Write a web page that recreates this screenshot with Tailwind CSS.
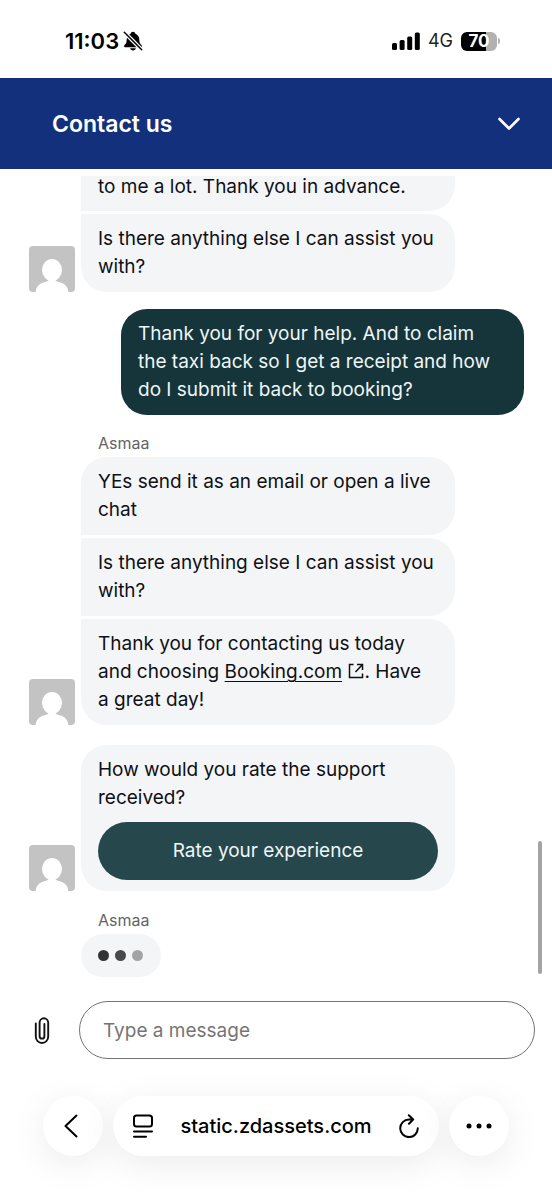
<!DOCTYPE html>
<html lang="en">
<head>
<meta charset="utf-8">
<meta name="viewport" content="width=device-width, initial-scale=1">
<title>Contact us</title>
<script src="https://cdn.jsdelivr.net/npm/@tailwindcss/browser@4"></script>
</head>
<body class="flex h-dvh flex-col overflow-hidden bg-white font-[Inter,'Liberation_Sans',sans-serif] text-[19px] leading-7 text-[#0f1014]">

<svg class="hidden" aria-hidden="true">
  <symbol id="avatar" viewBox="0 0 46 46">
    <rect width="46" height="46" rx="4" fill="#c3c3c3"/>
    <ellipse cx="23" cy="24" rx="10" ry="11" fill="#fff"/>
    <path d="M19.500 30h7v4.500c1 1.200 3.500 1.300 6 2.300 4 1.600 6.500 4.700 6.800 9.200H6.700c.3-4.500 2.800-7.600 6.800-9.200 2.500-1 5-1.100 6-2.300z" fill="#fff"/>
  </symbol>
</svg>

<!-- Phone status bar -->
<div class="flex h-[78px] shrink-0 items-center justify-between pt-1 pr-[52px] pl-[65px] text-black">
  <div class="flex items-center gap-1">
    <span class="text-[22px] font-semibold">11:03</span>
    <svg class="h-5 w-5" viewBox="0 0 20 20" role="img" aria-label="Silent">
      <path d="M10 .8c1.200 0 2.200.8 2.400 1.900 2.600.9 3.800 3 3.900 5.700.1 3.200.6 4 1.700 5.200.6.600.9 1 .9 1.600 0 .7-.5 1.100-1.400 1.100h-15c-.9 0-1.400-.4-1.400-1.100 0-.6.3-1 .9-1.600C3.100 12.400 3.600 11.600 3.700 8.400c.1-2.700 1.300-4.800 3.900-5.700C7.800 1.600 8.800.8 10 .8zM7.200 17.300h5.600c-.2 1.300-1.300 2.200-2.800 2.200s-2.600-.9-2.800-2.200z" fill="#000"/>
      <path d="M1.300 1.300 18.700 18.700" stroke="#fff" stroke-width="4"/>
      <path d="M1.300 1.300 18.700 18.700" stroke="#000" stroke-width="1.500" stroke-linecap="round"/>
    </svg>
  </div>
  <div class="flex items-center">
    <svg class="h-[18px] w-7" viewBox="0 0 28 18" role="img" aria-label="Signal strength">
      <rect x="0" y="11" width="5" height="7" rx="1.500"/><rect x="7.600" y="8" width="5" height="10" rx="1.500"/><rect x="15.200" y="4.500" width="5" height="13.500" rx="1.500"/><rect x="22.800" y=".5" width="5" height="17.500" rx="1.500"/>
    </svg>
    <span class="ml-2 text-lg text-[#222]">4G</span>
    <div class="ml-2 flex items-center gap-px">
      <div class="flex h-[19px] w-9 items-center justify-center rounded-[6px] bg-linear-to-r from-black from-70% to-[#b1b1b1] to-70% text-[17px] font-bold text-white">70</div>
      <span class="h-[6px] w-[2px] rounded-r-full bg-[#b1b1b1]"></span>
    </div>
  </div>
</div>

<header class="flex h-[91px] shrink-0 items-center justify-between bg-[#12307b] pr-8 pl-[52px] text-white">
  <h1 class="text-[23px] font-semibold">Contact us</h1>
  <button type="button" aria-label="Minimise" class="flex">
    <svg class="h-[14px] w-[22px]" viewBox="0 0 22 14" fill="none" stroke="currentColor" stroke-width="2.600" stroke-linecap="round" stroke-linejoin="round"><path d="m1.500 2 9.500 9.500L20.500 2"/></svg>
  </button>
</header>

<main class="relative mt-[6px] flex min-h-0 flex-1 flex-col justify-end overflow-hidden pr-7 pb-6 pl-[29px]">
  <div class="flex shrink-0 items-end gap-[6px] pr-[69px]">
    <svg class="size-[46px] shrink-0" role="img" aria-label="Agent"><use href="#avatar"/></svg>
    <div class="flex min-w-0 flex-1 flex-col gap-[3px]">
      <p class="rounded-br-[26px] bg-[#f4f5f7] px-[17px] pt-px pb-[14px] leading-5">to me a lot. Thank you in advance.</p>
      <p class="rounded-r-[26px] rounded-bl-[26px] bg-[#f4f5f7] px-[17px] py-[11px]">Is there anything else I can assist you<br>with?</p>
    </div>
  </div>

  <p class="mt-[17px] ml-[92px] shrink-0 rounded-[26px] bg-[#15353b] px-[17px] py-[11px] text-[#eef6f7]">Thank you for your help. And to claim<br>the taxi back so I get a receipt and how<br>do I submit it back to booking?</p>

  <div class="mt-4 ml-[69px] shrink-0 text-base leading-6 text-[#646464]">Asmaa</div>
  <div class="mt-[2px] flex shrink-0 items-end gap-[6px] pr-[69px]">
    <svg class="size-[46px] shrink-0" role="img" aria-label="Asmaa"><use href="#avatar"/></svg>
    <div class="flex min-w-0 flex-1 flex-col gap-[3px]">
      <p class="rounded-t-[26px] rounded-br-[26px] bg-[#f4f5f7] px-[17px] py-[11px]">YEs send it as an email or open a live<br>chat</p>
      <p class="rounded-r-[26px] bg-[#f4f5f7] px-[17px] py-[11px]">Is there anything else I can assist you<br>with?</p>
      <p class="rounded-r-[26px] rounded-bl-[26px] bg-[#f4f5f7] px-[17px] py-[11px]">Thank you for contacting us today<br>and choosing <a href="#" class="underline decoration-1 underline-offset-3">Booking.com</a> <svg class="ml-px inline-block size-4 align-[-1px]" viewBox="0 0 16 16" fill="none" stroke="currentColor" stroke-width="1.500" aria-hidden="true"><path d="M5.500 1.500h-4v13h13v-4M9 1.500h5.500V7M14.500 1.500 7.500 9"/></svg>. Have<br>a great day!</p>
    </div>
  </div>

  <div class="mt-5 flex shrink-0 items-end gap-[6px] pr-[69px]">
    <svg class="size-[46px] shrink-0" role="img" aria-label="Agent"><use href="#avatar"/></svg>
    <div class="min-w-0 flex-1 rounded-[26px] bg-[#f4f5f7] px-[17px] py-[11px]">
      <p>How would you rate the support<br>received?</p>
      <button type="button" class="mt-[10px] block h-[58px] w-full rounded-full bg-[#26484c] text-[#eef6f7]">Rate your experience</button>
    </div>
  </div>

  <div class="mt-[17px] ml-[69px] shrink-0 text-base leading-6 text-[#646464]">Asmaa</div>
  <div class="mt-[2px] ml-[52px] flex h-[43px] w-20 shrink-0 items-center gap-[6px] rounded-full bg-[#f4f5f7] pl-[17px]" role="status" aria-label="Asmaa is typing">
    <span class="size-[11px] rounded-full bg-[#313234]"></span>
    <span class="size-[11px] rounded-full bg-[#49494b]"></span>
    <span class="size-[11px] rounded-full bg-[#a2a3a5]"></span>
  </div>

  <!-- Scroll position indicator -->
  <div class="absolute right-[10px] bottom-[27px] h-[133px] w-1 rounded-full bg-[#a3a3a3]"></div>
</main>

<form class="flex shrink-0 items-center pr-[17px] pl-[34px]">
  <button type="button" aria-label="Attach a file" class="flex">
    <svg class="h-[27px] w-4" viewBox="0 0 16 27" fill="none" stroke="#111" stroke-width="1.900" stroke-linecap="round"><path d="M1.800 6.500v13.300a6.200 6.200 0 0 0 12.400 0V5.600a4.300 4.300 0 0 0-8.600 0v13.600a2.400 2.400 0 0 0 4.800 0V7"/></svg>
  </button>
  <input type="text" aria-label="Type a message" placeholder="Type a message" class="ml-[29px] h-[58px] min-w-0 flex-1 rounded-full border border-[#737373] bg-white px-[23px] placeholder:text-[#757575]">
</form>

<!-- Browser toolbar -->
<nav class="mt-[37px] mb-[43px] flex h-[60px] shrink-0 gap-[10px] px-[43px] text-black">
  <button type="button" aria-label="Back" class="flex w-[60px] shrink-0 items-center justify-center rounded-full bg-white pr-1 shadow-[0_8px_36px_rgba(0,0,0,0.08)]">
    <svg class="h-6 w-[14px]" viewBox="0 0 14 24" fill="none" stroke="currentColor" stroke-width="2" stroke-linecap="round" stroke-linejoin="round"><path d="M12.500 1.500 1.500 12l11 10.500"/></svg>
  </button>
  <div class="flex min-w-0 flex-1 items-center justify-between rounded-full bg-white px-5 shadow-[0_8px_36px_rgba(0,0,0,0.08)]">
    <button type="button" aria-label="Page menu" class="flex">
      <svg class="h-6 w-5" viewBox="0 0 20 24" fill="none" stroke="currentColor" stroke-width="2" stroke-linecap="round"><rect x="1" y="1.500" width="18" height="11" rx="2.500"/><path d="M1 17.500h18M1 22.800h12"/></svg>
    </button>
    <span class="text-xl font-medium">static.zdassets.com</span>
    <button type="button" aria-label="Reload" class="flex">
      <svg class="h-6 w-5" viewBox="0 0 20 24" fill="none" stroke="currentColor" stroke-width="2" stroke-linecap="round" stroke-linejoin="round"><path d="M14.200 5.500H10A8.800 8.800 0 1 0 18.800 14.200M9.800 1.200l4.400 4.300-4.200 4.300"/></svg>
    </button>
  </div>
  <button type="button" aria-label="More" class="flex w-[60px] shrink-0 items-center justify-center rounded-full bg-white shadow-[0_8px_36px_rgba(0,0,0,0.08)]">
    <svg class="h-[6px] w-[26px]" viewBox="0 0 26 6" fill="currentColor"><circle cx="3" cy="3" r="2.500"/><circle cx="13" cy="3" r="2.500"/><circle cx="23" cy="3" r="2.500"/></svg>
  </button>
</nav>
</body>
</html>
